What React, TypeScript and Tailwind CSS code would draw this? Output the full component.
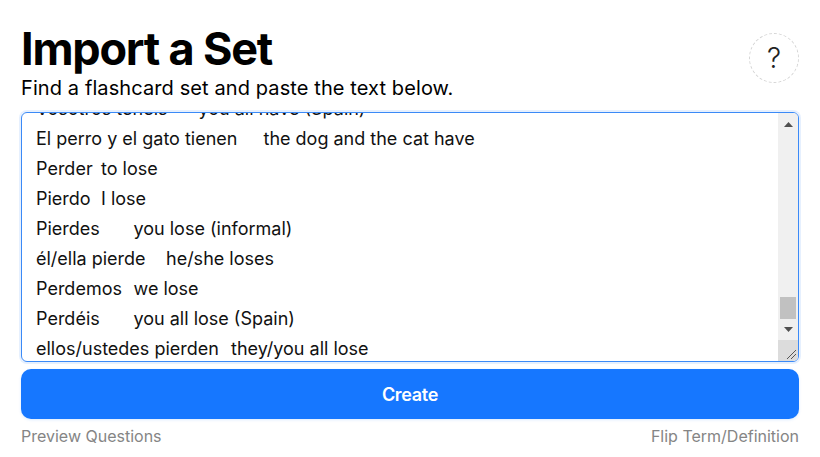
import { useEffect, useRef } from "react";

const lines = [
  "Ser\tto be",
  "Soy\tI am",
  "Eres\tyou are (informal)",
  "él/ella es\the/she is",
  "Somos\twe are",
  "Sois\tyou all are (Spain)",
  "ellos/ustedes son\tthey/you all are",
  "Estar\tto be (location, feeling)",
  "Estoy\tI am",
  "Estás\tyou are (informal)",
  "él/ella está\the/she is",
  "Estamos\twe are",
  "Estáis\tyou all are (Spain)",
  "ellos/ustedes están\tthey/you all are",
  "Ir\tto go",
  "Voy\tI go",
  "Vas\tyou go (informal)",
  "él/ella va\the/she goes",
  "Vamos\twe go",
  "Vais\tyou all go (Spain)",
  "ellos/ustedes van\tthey/you all go",
  "Hacer\tto do / to make",
  "Hago\tI do",
  "Haces\tyou do (informal)",
  "él/ella hace\the/she does",
  "Hacemos\twe do",
  "Hacéis\tyou all do (Spain)",
  "ellos/ustedes hacen\tthey/you all do",
  "Poder\tto be able to",
  "Puedo\tI can",
  "Puedes\tyou can (informal)",
  "él/ella puede\the/she can",
  "Podemos\twe can",
  "Podéis\tyou all can (Spain)",
  "ellos/ustedes pueden\tthey/you all can",
  "Querer\tto want",
  "Quiero\tI want",
  "Quieres\tyou want (informal)",
  "él/ella quiere\the/she wants",
  "Queremos\twe want",
  "Queréis\tyou all want (Spain)",
  "ellos/ustedes quieren\tthey/you all want",
  "Tener\tto have",
  "Tengo\tI have",
  "Tienes\tyou have (informal)",
  "él/ella tiene\the/she has",
  "Tenemos\twe have",
  "Vosotros tenéis\tyou all have (Spain)",
  "El perro y el gato tienen\tthe dog and the cat have",
  "Perder\tto lose",
  "Pierdo\tI lose",
  "Pierdes\tyou lose (informal)",
  "él/ella pierde\the/she loses",
  "Perdemos\twe lose",
  "Perdéis\tyou all lose (Spain)",
  "ellos/ustedes pierden\tthey/you all lose",
];

const text = lines.join("\n");

function Arrow({ down }: { down?: boolean }) {
  return (
    <svg width="9" height="5" viewBox="0 0 9 5" className="fill-[#505050]">
      <polygon points={down ? "0,0 9,0 4.5,5" : "0,5 9,5 4.5,0"} />
    </svg>
  );
}

export default function App() {
  const ref = useRef<HTMLTextAreaElement>(null);

  useEffect(() => {
    const el = ref.current;
    if (!el) return;
    el.focus();
    el.setSelectionRange(text.length, text.length);
    el.scrollTop = el.scrollHeight;
  }, []);

  return (
    <div className="min-h-screen bg-white px-[21px] pt-[22px] font-['Inter',sans-serif] text-black">
      <div className="flex items-start justify-between">
        <div>
          <h1 className="text-[45px] font-bold leading-[54px] tracking-[-1.2px]">
            Import a Set
          </h1>
          <p className="text-[20px] leading-[24px] tracking-[0.1px]">
            Find a flashcard set and paste the text below.
          </p>
        </div>
        <button
          className="mt-[11px] flex h-[50px] w-[50px] items-center justify-center rounded-full border border-dashed border-[#d4d4d4] text-[28px] font-light text-[#222]"
          aria-label="Help"
        >
          ?
        </button>
      </div>

      {/* textarea + hand-drawn classic scrollbar */}
      <div className="mt-[12px] flex h-[250px] overflow-hidden rounded-[6px] border border-[#3b8af7] shadow-[0_0_0_2px_rgba(59,138,247,0.13)]">
        <textarea
          ref={ref}
          defaultValue={text}
          spellCheck={false}
          className="block h-[251px] min-w-0 flex-1 shrink-0 resize-none self-start px-[14px] pb-0 pt-[4px] text-[18px] leading-[30px] text-[#111] outline-none [scrollbar-width:none] [tab-size:32.5px]"
        />
        <div className="flex w-[20px] shrink-0 flex-col bg-[#f0f0f0]">
          <div className="flex h-[20px] items-center justify-center pt-[2px]">
            <Arrow />
          </div>
          <div className="flex flex-1 flex-col justify-end px-[2px] pb-[1px]">
            <div className="h-[22px] bg-[#c1c1c1]" />
          </div>
          <div className="flex h-[20px] items-center justify-center pb-[2px]">
            <Arrow down />
          </div>
          <div className="flex h-[21px] items-end justify-end bg-[#dcdcdc] p-[2px]">
            <svg width="10" height="10" viewBox="0 0 10 10" className="stroke-[#555]">
              <line x1="1" y1="10" x2="10" y2="1" strokeWidth="1" />
              <line x1="5" y1="10" x2="10" y2="5" strokeWidth="1" />
            </svg>
          </div>
        </div>
      </div>

      <button className="mt-[7px] flex h-[50px] w-full items-center justify-center rounded-[10px] bg-[#1677ff] text-[18px] font-semibold tracking-[-0.3px] text-white shadow-[0_1px_3px_rgba(22,119,255,0.15)]">
        Create
      </button>

      <div className="mt-[5px] flex justify-between text-[16px] text-[#858585]">
        <span>Preview Questions</span>
        <span>Flip Term/Definition</span>
      </div>
    </div>
  );
}
